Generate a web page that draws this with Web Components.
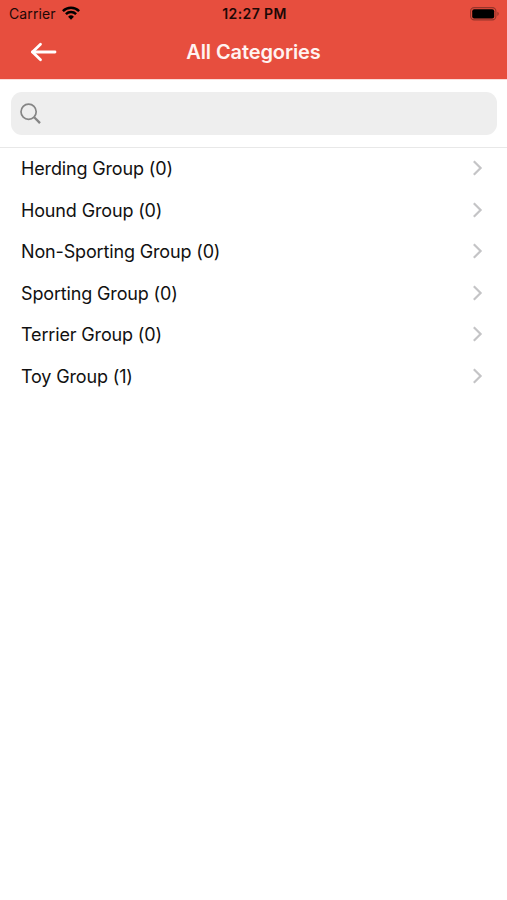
<!DOCTYPE html>
<html lang="en">
<head>
<meta charset="utf-8">
<meta name="viewport" content="width=device-width, initial-scale=1">
<title>All Categories</title>
<style>
  body {
    margin: 0;
    background: #fff;
    font-family: Inter, "Liberation Sans", sans-serif;
  }
</style>
</head>
<body>
<category-screen>
  <status-bar slot="header" carrier="Carrier" time="12:27 PM"></status-bar>
  <nav-header slot="header">All Categories</nav-header>
  <search-bar></search-bar>
  <category-list>
    <category-row>Herding Group (0)</category-row>
    <category-row>Hound Group (0)</category-row>
    <category-row>Non-Sporting Group (0)</category-row>
    <category-row>Sporting Group (0)</category-row>
    <category-row>Terrier Group (0)</category-row>
    <category-row>Toy Group (1)</category-row>
  </category-list>
</category-screen>

<script>
class CategoryScreen extends HTMLElement {
  constructor() {
    super();
    this.attachShadow({ mode: "open" });
    this.shadowRoot.innerHTML = `
      <style>
        :host {
          display: block;
          min-height: 100vh;
          background: #fff;
        }
        header {
          height: 80px;
          background: #e74e3e;
          border-bottom: 1px solid #fbdcd8;
          box-sizing: border-box;
        }
      </style>
      <header><slot name="header"></slot></header>
      <main><slot></slot></main>
    `;
  }
}

class StatusBar extends HTMLElement {
  constructor() {
    super();
    this.attachShadow({ mode: "open" });
    this.shadowRoot.innerHTML = `
      <style>
        :host {
          display: grid;
          grid-template-columns: 1fr auto 1fr;
          align-items: center;
          height: 27px;
          padding: 0 7px 0 9px;
          color: #1d0806;
          font-size: 14px;
          line-height: 27px;
        }
        .left {
          display: flex;
          align-items: center;
          gap: 6px;
        }
        .carrier {
          letter-spacing: 0.1px;
        }
        .time {
          font-weight: 600;
          letter-spacing: 0.4px;
        }
        svg {
          display: block;
        }
        .wifi {
          margin-bottom: 1px;
          color: #000;
        }
        .battery {
          justify-self: end;
        }
      </style>
      <div class="left">
        <span class="carrier"></span>
        <svg class="wifi" width="18" height="14" viewBox="0 0 18 14" fill="none" stroke="currentColor" stroke-width="2.5" aria-hidden="true">
          <path d="M.9 5.1a11.6 11.6 0 0 1 16.2 0"></path>
          <path d="M3.9 8.2a7.3 7.3 0 0 1 10.2 0"></path>
          <path d="M9 13.7 6.1 10.8a4.1 4.1 0 0 1 5.8 0Z" fill="currentColor" stroke="none"></path>
        </svg>
      </div>
      <span class="time"></span>
      <svg class="battery" width="30" height="14" viewBox="0 0 30 14" aria-hidden="true">
        <rect x=".6" y=".6" width="25.3" height="12.3" rx="3.6" fill="none" stroke="#96352b" stroke-width="1.1"></rect>
        <rect x="2.2" y="2.2" width="22" height="9.2" rx="2" fill="#000"></rect>
        <path d="M27.4 4.7c1.8.6 1.8 3.6 0 4.2Z" fill="#96352b"></path>
      </svg>
    `;
  }

  connectedCallback() {
    this.shadowRoot.querySelector(".carrier").textContent = this.getAttribute("carrier");
    this.shadowRoot.querySelector(".time").textContent = this.getAttribute("time");
  }
}

class NavHeader extends HTMLElement {
  constructor() {
    super();
    this.attachShadow({ mode: "open" });
    this.shadowRoot.innerHTML = `
      <style>
        :host {
          display: grid;
          grid-template-columns: 80px 1fr 80px;
          align-items: center;
          height: 50px;
          color: #fff;
        }
        button {
          display: flex;
          padding: 0;
          margin-left: 30px;
          border: 0;
          background: none;
          color: inherit;
        }
        h1 {
          margin: 0;
          font-size: 20px;
          font-weight: 600;
          line-height: 24px;
          letter-spacing: -0.1px;
          text-align: center;
          color: #fff3f1;
        }
      </style>
      <button aria-label="Back">
        <svg width="27" height="20" viewBox="0 0 27 20" fill="none" stroke="currentColor" stroke-width="2.8" stroke-linecap="round" stroke-linejoin="round" aria-hidden="true">
          <path d="M10.5 2.3 2.5 10l8 7.7"></path>
          <path d="M2.5 10H25"></path>
        </svg>
      </button>
      <h1><slot></slot></h1>
    `;
  }
}

class SearchBar extends HTMLElement {
  constructor() {
    super();
    this.attachShadow({ mode: "open" });
    this.shadowRoot.innerHTML = `
      <style>
        :host {
          display: block;
          padding: 12px 10px 12px 11px;
          border-bottom: 1px solid #e8e8e8;
        }
        label {
          display: flex;
          align-items: center;
          gap: 8px;
          height: 43px;
          padding: 0 9px;
          border-radius: 11px;
          background: #eee;
          box-sizing: border-box;
        }
        svg {
          flex: none;
        }
        input {
          flex: 1;
          min-width: 0;
          border: 0;
          outline: 0;
          background: none;
          font: inherit;
          font-size: 18px;
        }
      </style>
      <label>
        <svg width="22" height="22" viewBox="0 0 22 22" fill="none" stroke="#858585" aria-hidden="true">
          <circle cx="8.6" cy="8.7" r="7.6" stroke-width="1.7"></circle>
          <path d="m14.2 14.3 5.8 5.8" stroke-width="2.3"></path>
        </svg>
        <input type="text" aria-label="Search">
      </label>
    `;
  }
}

class CategoryList extends HTMLElement {
  constructor() {
    super();
    this.attachShadow({ mode: "open" });
    this.shadowRoot.innerHTML = `
      <style>
        :host {
          display: flex;
          flex-direction: column;
          padding-top: 0.3px;
        }
      </style>
      <slot></slot>
    `;
  }
}

class CategoryRow extends HTMLElement {
  constructor() {
    super();
    this.attachShadow({ mode: "open" });
    this.shadowRoot.innerHTML = `
      <style>
        :host {
          display: flex;
          align-items: center;
          justify-content: space-between;
          height: 41.5px;
          padding: 0 24px 0 21px;
          color: #111;
          font-size: 18px;
          line-height: 24px;
          letter-spacing: -0.15px;
        }
        svg {
          flex: none;
          margin-bottom: 1.4px;
        }
      </style>
      <span><slot></slot></span>
      <svg width="11" height="16" viewBox="0 0 11 16" fill="none" stroke="#c4c4c6" stroke-width="2.2" aria-hidden="true">
        <path d="m1.8 1.2 6.8 6.8-6.8 6.8"></path>
      </svg>
    `;
  }
}

customElements.define("category-screen", CategoryScreen);
customElements.define("status-bar", StatusBar);
customElements.define("nav-header", NavHeader);
customElements.define("search-bar", SearchBar);
customElements.define("category-list", CategoryList);
customElements.define("category-row", CategoryRow);
</script>
</body>
</html>
